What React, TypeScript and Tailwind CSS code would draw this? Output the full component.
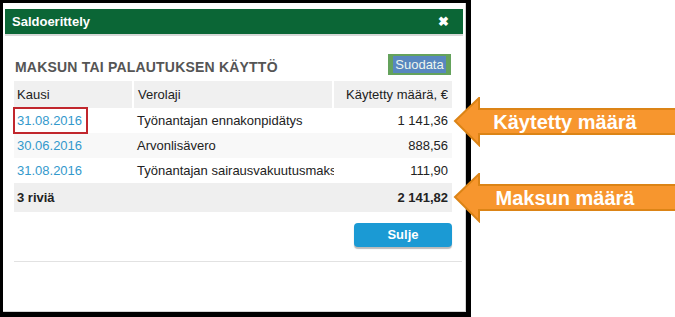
import React from "react";

type Row = { date: string; type: string; amount: string; marked?: boolean; alt?: boolean };

const rows: Row[] = [
  { date: "31.08.2016", type: "Työnantajan ennakonpidätys", amount: "1 141,36", marked: true },
  { date: "30.06.2016", type: "Arvonlisävero", amount: "888,56", alt: true },
  { date: "31.08.2016", type: "Työnantajan sairausvakuutusmaksu", amount: "111,90" },
];

function Callout({ top, label }: { top: number; label: string }) {
  return (
    <div className="absolute left-[453px] w-[222px] h-[50px]" style={{ top }}>
      <svg width="226" height="50" viewBox="0 0 226 50" className="absolute left-0 top-0">
        <polygon
          points="2,24 26,1 26,12 226,12 226,37 26,37 26,48"
          fill="#f7962e"
          stroke="#dc8416"
          strokeWidth="2"
          strokeLinejoin="miter"
        />
      </svg>
      <div className="absolute left-[26px] top-[12px] w-[172px] h-[25px] flex items-center justify-center text-white font-bold text-[20px] leading-none">
        {label}
      </div>
    </div>
  );
}

export default function App() {
  return (
    <div className="relative w-[675px] h-[317px] bg-white overflow-hidden font-['Liberation_Sans',Arial,sans-serif]">
      <div className="w-[471px] h-[317px] bg-black pl-[3px] pt-[3px] pr-[5px] pb-[5px]">
        <div className="w-full h-full bg-white border-r border-b border-[#d4d4d4] pt-[6px] px-[2px] flex flex-col">
          {/* header */}
          <div className="h-[25px] bg-[#0b6636] flex items-center justify-between pl-[7px] pr-[14px] shadow-[0_2px_0_#d8d8d8]">
            <span className="text-white font-bold text-[13px]">Saldoerittely</span>
            <span className="text-white font-bold text-[13px] leading-none">✖</span>
          </div>

          <div className="pl-[9px] pr-[12px] pt-[20px]">
            <div className="h-[21px] flex items-center justify-between">
              <span className="text-[#555] font-bold text-[14px] tracking-[0.2px] pl-[1px] pt-[6px]">MAKSUN TAI PALAUTUKSEN KÄYTTÖ</span>
              <div className="h-[21px] w-[63px] bg-[#64a25c] flex items-center justify-center">
                <span className="bg-[#5887bf] text-[#eef6ee] text-[13px] px-[2px] leading-[17px]">Suodata</span>
              </div>
            </div>

            {/* table */}
            <div className="mt-[6px] w-[438px] text-[13px] text-[#222]">
              <div className="h-[27px] flex bg-white gap-[2px]">
                <div className="w-[118px] bg-[#f0f0f0] flex items-center pl-[3px]">Kausi</div>
                <div className="w-[198px] bg-[#f0f0f0] flex items-center pl-[4px]">Verolaji</div>
                <div className="flex-1 bg-[#f0f0f0] flex items-center justify-end pr-[4px]">Käytetty määrä, €</div>
              </div>
              {rows.map((r, i) => (
                <div key={i} className={`h-[25px] flex ${r.alt ? "bg-[#f8f8f8]" : "bg-white"}`}>
                  <div className="w-[120px] flex items-center pl-[3px]">
                    <span
                      className={`text-[#3399cc] ${r.marked ? "outline-2 outline-[#c1272d] -ml-[2px] pl-[2px] pr-[4px] py-[2px]" : ""}`}
                    >
                      {r.date}
                    </span>
                  </div>
                  <div className="w-[200px] flex items-center pl-[3px] overflow-hidden whitespace-nowrap">{r.type}</div>
                  <div className="flex-1 flex items-center justify-end pr-[4px]">{r.amount}</div>
                </div>
              ))}
              <div className="h-[29px] flex items-center justify-between bg-[#efefef] font-bold px-[4px] pl-[3px]">
                <span>3 riviä</span>
                <span>2 141,82</span>
              </div>
            </div>

            <div className="w-[438px] flex justify-end mt-[11px]">
              <button className="w-[98px] h-[24px] rounded-[4px] bg-[#1b9ad4] text-white font-bold text-[13px] shadow-[0_2px_1px_#bbb]">
                Sulje
              </button>
            </div>

            <div className="mt-[14px] w-[448px] h-px bg-[#e2e2e2]" />
          </div>
        </div>
      </div>

      <Callout top={97} label="Käytetty määrä" />
      <Callout top={173} label="Maksun määrä" />
    </div>
  );
}
